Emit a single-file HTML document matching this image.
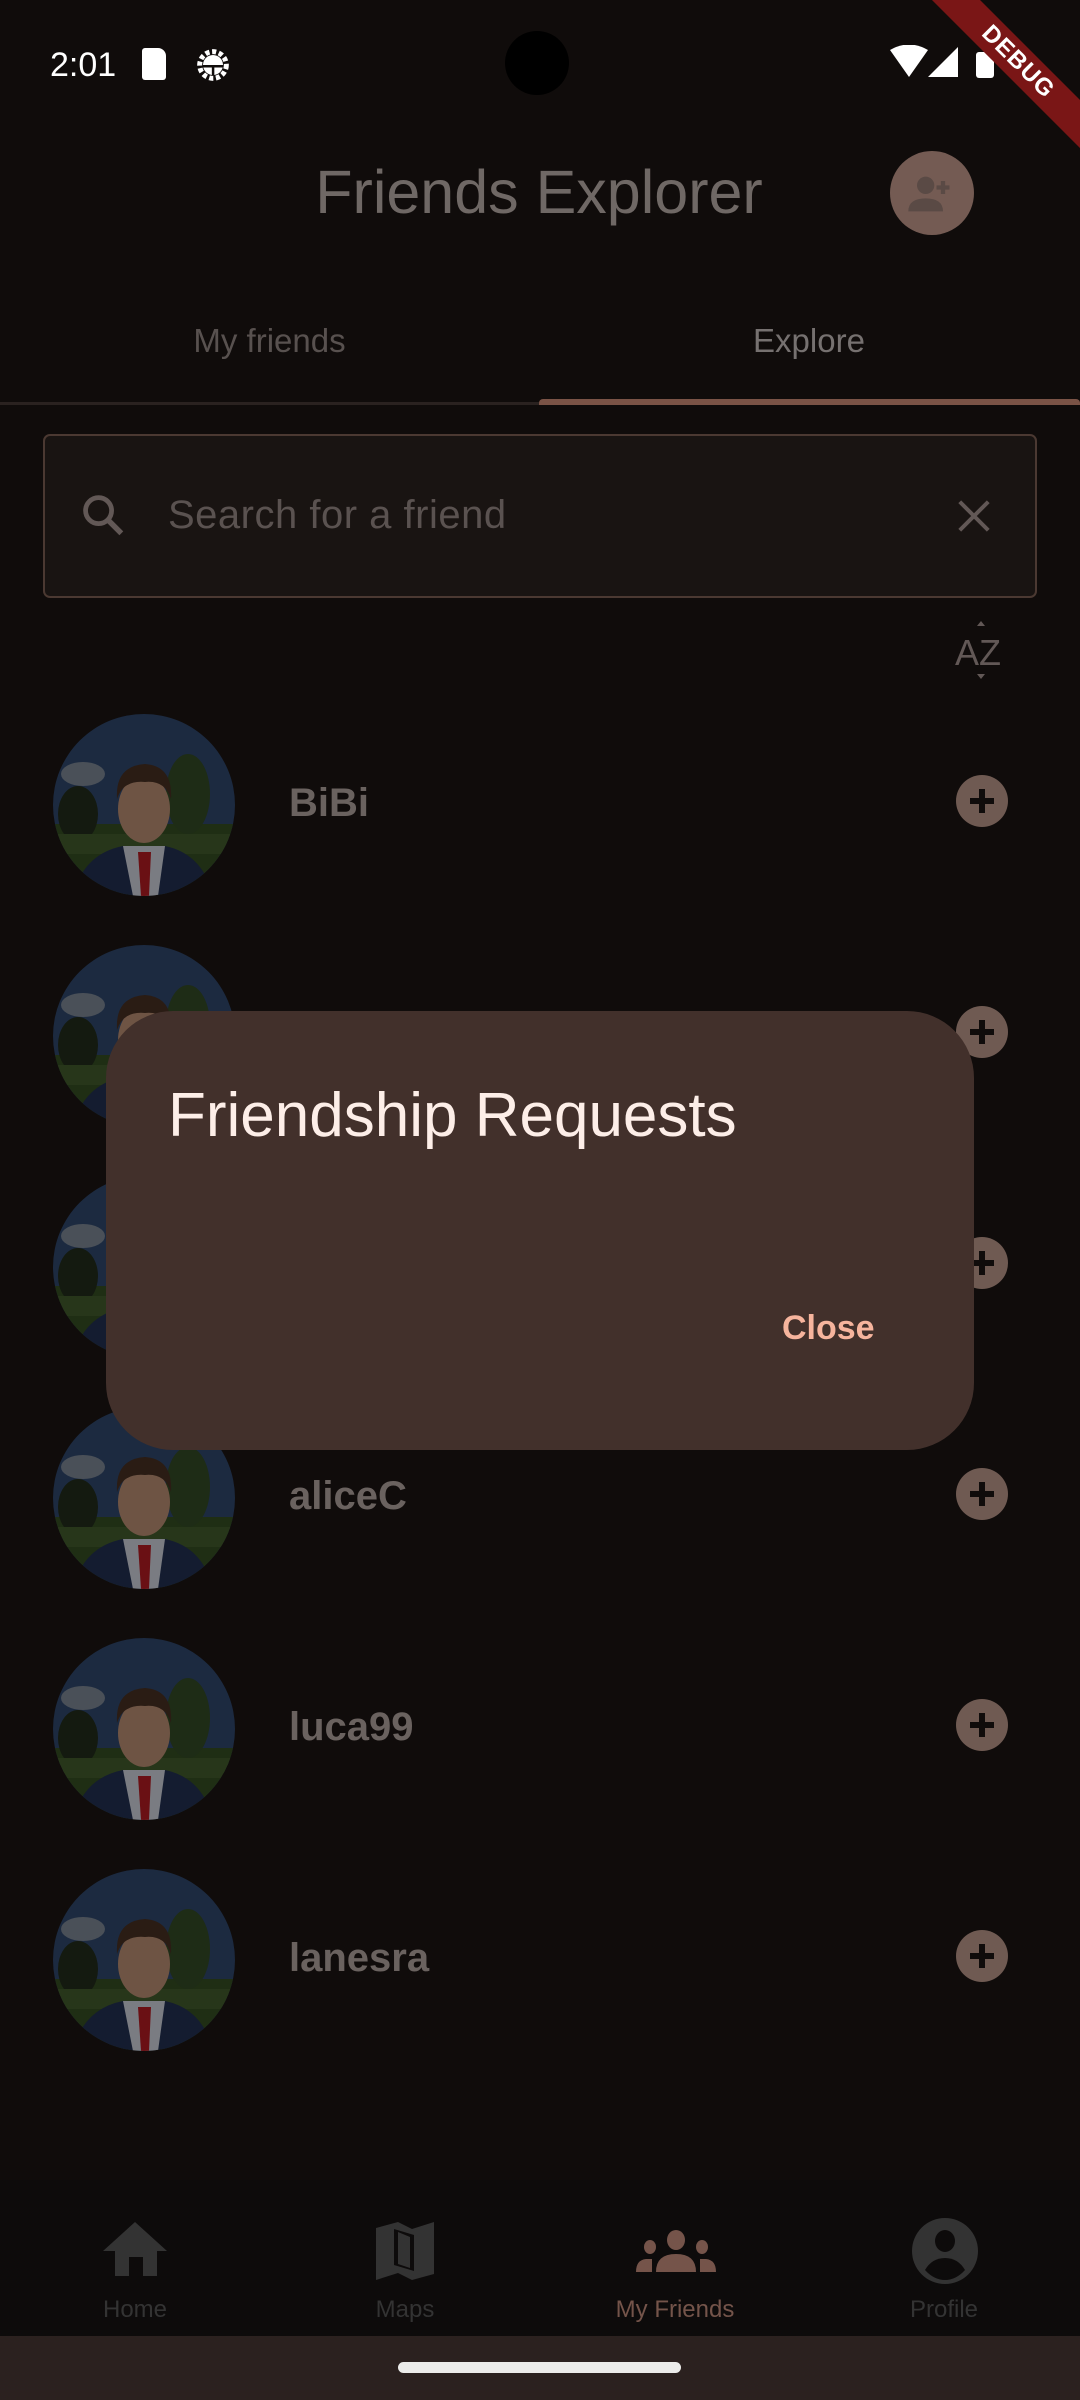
<!DOCTYPE html>
<html><head><meta charset="utf-8"><style>
*{margin:0;padding:0;box-sizing:border-box}
body{width:1080px;height:2400px;background:#100c0b;position:relative;overflow:hidden;font-family:"Liberation Sans",sans-serif}
.abs{position:absolute}
.name{position:absolute;left:289px;font-size:40px;font-weight:bold;color:#6a625f}
.plus{position:absolute;left:956px;width:52px;height:52px;border-radius:50%;background:#6f5a52}
.plus:before,.plus:after{content:"";position:absolute;background:#100c0b;left:14px;top:23px;width:24px;height:6px}
.plus:after{left:23px;top:14px;width:6px;height:24px}
.av{position:absolute;left:53px;width:182px;height:182px}
.nl{position:absolute;top:2296px;font-size:24px;color:#333;width:200px;text-align:center}
</style></head><body>
<svg width="0" height="0" style="position:absolute"><defs>
<clipPath id="c"><circle cx="91" cy="91" r="91"/></clipPath>
<symbol id="a" viewBox="0 0 182 182"><g clip-path="url(#c)">
<rect width="182" height="182" fill="#1c2a40"/>
<rect y="110" width="182" height="72" fill="#1f2e14"/>
<ellipse cx="30" cy="60" rx="22" ry="12" fill="#4a5058"/>
<ellipse cx="135" cy="80" rx="22" ry="40" fill="#1e2c16"/>
<ellipse cx="25" cy="100" rx="20" ry="28" fill="#141a10"/>
<rect y="120" width="182" height="20" fill="#27361a"/>
<path d="M20 182 Q30 140 70 132 L112 132 Q150 140 160 182Z" fill="#141c30"/>
<path d="M70 132 L80 182 L105 182 L112 132Z" fill="#7a7c82"/>
<path d="M85 138 L98 138 L96 182 L88 182Z" fill="#6a1014"/>
<ellipse cx="91" cy="95" rx="26" ry="34" fill="#6e5444"/>
<path d="M64 85 Q62 52 92 50 Q120 52 118 85 Q112 66 92 68 Q70 66 64 85Z" fill="#2a1c14"/>
</g></symbol></defs></svg>

<!-- status bar -->
<div class="abs" style="left:50px;top:46px;font-size:34px;color:#fff">2:01</div>
<div class="abs" style="left:142px;top:48px;width:24px;height:32px;background:#fff;border-radius:3px 8px 3px 3px"></div>
<svg class="abs" style="left:193px;top:45px" width="40" height="40" viewBox="0 0 24 24"><circle cx="12" cy="12" r="8" fill="none" stroke="#fff" stroke-width="3" stroke-dasharray="2.5 1.6"/><circle cx="12" cy="12" r="6" fill="#fff"/><rect x="6" y="12" width="12" height="1.5" fill="#100c0b"/><rect x="11.3" y="12" width="1.5" height="6" fill="#100c0b"/></svg>
<div class="abs" style="left:505px;top:31px;width:64px;height:64px;border-radius:50%;background:#000"></div>
<svg class="abs" style="left:890px;top:45px" width="160" height="40" viewBox="0 0 160 40"><path d="M0 5 Q19 -6 38 5 L19 32Z" fill="#fff"/><path d="M68 2 L68 32 L38 32Z" fill="#fff"/><rect x="86" y="7" width="18" height="26" rx="3" fill="#fff"/></svg>
<div class="abs" style="left:868px;top:45px;width:300px;height:34px;background:#7a1616;transform:rotate(45deg);color:#fff;font-weight:bold;font-size:24px;text-align:center;line-height:34px;letter-spacing:1px">DEBUG</div>

<!-- app bar -->
<div class="abs" style="left:0;width:1078px;top:157px;text-align:center;font-size:61px;color:#6f6865">Friends Explorer</div>
<div class="abs" style="left:890px;top:151px;width:84px;height:84px;border-radius:50%;background:#745b53"></div>
<svg class="abs" style="left:904px;top:168px" width="52" height="52" viewBox="0 0 24 24"><circle cx="10" cy="8" r="4" fill="#5a4a45"/><path d="M2 20 Q2 14 10 14 Q18 14 18 20Z" fill="#5a4a45"/><path d="M18 6v6M15 9h6" stroke="#5a4a45" stroke-width="2"/></svg>

<!-- tabs -->
<div class="abs" style="left:0;width:539px;top:322px;text-align:center;font-size:33px;color:#58514f">My friends</div>
<div class="abs" style="left:539px;width:540px;top:322px;text-align:center;font-size:33px;color:#767170">Explore</div>
<div class="abs" style="left:0;top:402px;width:1080px;height:3px;background:#2a2220"></div>
<div class="abs" style="left:539px;top:399px;width:541px;height:6px;background:#7a5346;border-radius:4px 4px 0 0"></div>

<!-- search -->
<div class="abs" style="left:43px;top:434px;width:994px;height:164px;border:2px solid #4b3932;border-radius:7px;background:#191412"></div>
<svg class="abs" style="left:78px;top:490px" width="52" height="52" viewBox="0 0 24 24"><circle cx="9.5" cy="9.5" r="6" fill="none" stroke="#625856" stroke-width="2.2"/><path d="M14 14l6 6" stroke="#625856" stroke-width="2.5"/></svg>
<div class="abs" style="left:168px;top:493px;font-size:40px;color:#5a5250;letter-spacing:0.5px">Search for a friend</div>
<svg class="abs" style="left:955px;top:497px" width="38" height="38" viewBox="0 0 24 24"><path d="M3 3L21 21M21 3L3 21" stroke="#625856" stroke-width="2.5"/></svg>
<div class="abs" style="left:955px;top:632px;font-size:36px;color:#625856">AZ</div>
<svg class="abs" style="left:974px;top:620px" width="14" height="60" viewBox="0 0 14 60"><path d="M3 6L7 1L11 6Z M3 54L7 59L11 54Z" fill="#625856"/></svg>

<!-- list -->
<svg class="av" style="top:714px"><use href="#a"/></svg>
<div class="name" style="top:781px">BiBi</div><div class="plus" style="top:775px"></div>
<svg class="av" style="top:945px"><use href="#a"/></svg>
<div class="plus" style="top:1006px"></div>
<svg class="av" style="top:1176px"><use href="#a"/></svg>
<div class="plus" style="top:1237px"></div>
<svg class="av" style="top:1407px"><use href="#a"/></svg>
<div class="name" style="top:1474px">aliceC</div><div class="plus" style="top:1468px"></div>
<svg class="av" style="top:1638px"><use href="#a"/></svg>
<div class="name" style="top:1705px">luca99</div><div class="plus" style="top:1699px"></div>
<svg class="av" style="top:1869px"><use href="#a"/></svg>
<div class="name" style="top:1936px">lanesra</div><div class="plus" style="top:1930px"></div>

<!-- dialog -->
<div class="abs" style="left:106px;top:1011px;width:868px;height:439px;background:#42302b;border-radius:67px"></div>
<div class="abs" style="left:168px;top:1080px;font-size:62px;color:#fdeee8">Friendship Requests</div>
<div class="abs" style="left:782px;top:1309px;font-size:34px;color:#f6b49d;font-weight:bold">Close</div>

<!-- bottom nav -->
<div class="abs" style="left:0;top:2180px;width:1080px;height:156px;background:#0d0b0b"></div>
<svg class="abs" style="left:103px;top:2220px" width="64" height="60" viewBox="0 0 64 60"><path d="M32 2L64 31H54V56H40V37H26V56H12V31H0Z" fill="#333"/></svg>
<svg class="abs" style="left:374px;top:2220px" width="62" height="62" viewBox="0 0 62 62"><path d="M2 8L24 2L38 9L60 2V54L38 60L24 53L2 60Z" fill="#333"/><path d="M20 9L40 15V51L20 45Z" fill="#0d0b0b"/><path d="M24 12L36 17V48L24 44Z" fill="#333"/></svg>
<svg class="abs" style="left:636px;top:2230px" width="80" height="44" viewBox="0 0 80 44"><ellipse cx="40" cy="10" rx="9" ry="10" fill="#75544a"/><ellipse cx="14" cy="17" rx="6" ry="7" fill="#75544a"/><ellipse cx="66" cy="17" rx="6" ry="7" fill="#75544a"/><path d="M20 42Q20 24 40 24Q60 24 60 42Z M0 42Q0 30 10 29H16Q16 35 16 42Z M80 42Q80 30 70 29H64Q64 35 64 42Z" fill="#75544a"/></svg>
<svg class="abs" style="left:912px;top:2218px" width="66" height="66" viewBox="0 0 66 66"><circle cx="33" cy="33" r="33" fill="#333"/><ellipse cx="33" cy="23" rx="10" ry="11" fill="#0d0b0b"/><path d="M13 52Q20 40 33 40Q46 40 53 52Q44 62 33 62Q22 62 13 52Z" fill="#0d0b0b"/></svg>
<div class="nl" style="left:35px">Home</div>
<div class="nl" style="left:305px">Maps</div>
<div class="nl" style="left:575px;color:#74544a">My Friends</div>
<div class="nl" style="left:844px">Profile</div>
<div class="abs" style="left:0;top:2336px;width:1080px;height:64px;background:#2b211f"></div>
<div class="abs" style="left:398px;top:2362px;width:283px;height:11px;border-radius:6px;background:#ececea"></div>
</body></html>
